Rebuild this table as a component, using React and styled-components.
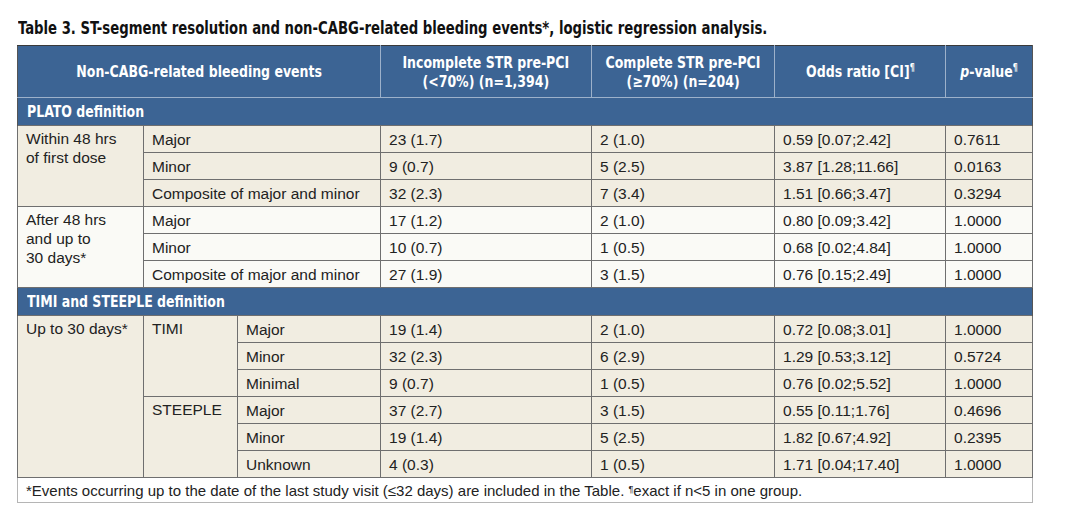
import React from "react";
import styled, { createGlobalStyle } from "styled-components";

const GlobalStyle = createGlobalStyle`
  body {
    margin: 0;
    background: #ffffff;
    font-family: "Liberation Sans", Arial, sans-serif;
  }
`;

const Page = styled.div`
  padding: 17px 0 0 17px;
  width: 1016px;
`;

// bold condensed face: DejaVu Sans Condensed squeezed a little more
const Narrow = styled.span`
  display: inline-block;
  white-space: nowrap;
  font-family: "DejaVu Sans Condensed", sans-serif;
  font-weight: bold;
  transform: scaleX(${(p) => p.$scale || 0.87});
  transform-origin: ${(p) => (p.$center ? "center" : "left")};
`;

const Title = styled.div`
  font-size: 17px;
  color: #111;
  line-height: 22px;
  height: 28px;
  padding-left: 1px;
`;

const Table = styled.table`
  border-collapse: collapse;
  width: 1015px;
  table-layout: fixed;
  font-family: "Liberation Sans", Arial, sans-serif;
  font-size: 15.5px;
  color: #222;
`;

const HeadCell = styled.th`
  background: #3c6494;
  color: #fff;
  font-weight: bold;
  font-size: 16px;
  line-height: 19px;
  height: 51px;
  padding: 0 2px;
  text-align: center;
  border-top: 1px solid #3a3a3a;
  border-left: 1px solid #9db1ca;
  border-right: 1px solid #9db1ca;
  border-bottom: 1px solid #9db1ca;
  &:first-child {
    border-left: 1px solid #555;
  }
  &:last-child {
    border-right: 1px solid #555;
  }
  sup {
    font-size: 10px;
    vertical-align: 6px;
    line-height: 0;
  }
  i {
    font-style: italic;
  }
`;

const SectionCell = styled.td`
  background: #3c6494;
  color: #fff;
  font-size: 16px;
  height: 27px;
  padding: 0 9px;
  border-left: 1px solid #555;
  border-right: 1px solid #555;
`;

const Cell = styled.td`
  background: ${(p) => (p.$light ? "#fafaf6" : "#f1ede1")};
  border: 1px solid #6f6f6f;
  height: 26px;
  padding: 0 8px;
  line-height: 19px;
  white-space: nowrap;
  vertical-align: ${(p) => (p.$top ? "top" : "middle")};
  padding-top: ${(p) => (p.$top ? "3px" : "0")};
`;

const Footer = styled.td`
  background: #fff;
  border: 1px solid #b5b5b5;
  border-top: 1px solid #6f6f6f;
  font-size: 15px;
  height: 24px;
  padding: 0 8px;
  color: #222;
  white-space: nowrap;
  sup {
    font-size: 9px;
    vertical-align: 4px;
    line-height: 0;
  }
`;

const plato = [
  {
    label: ["Within 48 hrs", "of first dose"],
    light: false,
    rows: [
      ["Major", "23 (1.7)", "2 (1.0)", "0.59 [0.07;2.42]", "0.7611"],
      ["Minor", "9 (0.7)", "5 (2.5)", "3.87 [1.28;11.66]", "0.0163"],
      ["Composite of major and minor", "32 (2.3)", "7 (3.4)", "1.51 [0.66;3.47]", "0.3294"],
    ],
  },
  {
    label: ["After 48 hrs", "and up to", "30 days*"],
    light: true,
    rows: [
      ["Major", "17 (1.2)", "2 (1.0)", "0.80 [0.09;3.42]", "1.0000"],
      ["Minor", "10 (0.7)", "1 (0.5)", "0.68 [0.02;4.84]", "1.0000"],
      ["Composite of major and minor", "27 (1.9)", "3 (1.5)", "0.76 [0.15;2.49]", "1.0000"],
    ],
  },
];

const timi = [
  {
    name: "TIMI",
    rows: [
      ["Major", "19 (1.4)", "2 (1.0)", "0.72 [0.08;3.01]", "1.0000"],
      ["Minor", "32 (2.3)", "6 (2.9)", "1.29 [0.53;3.12]", "0.5724"],
      ["Minimal", "9 (0.7)", "1 (0.5)", "0.76 [0.02;5.52]", "1.0000"],
    ],
  },
  {
    name: "STEEPLE",
    rows: [
      ["Major", "37 (2.7)", "3 (1.5)", "0.55 [0.11;1.76]", "0.4696"],
      ["Minor", "19 (1.4)", "5 (2.5)", "1.82 [0.67;4.92]", "0.2395"],
      ["Unknown", "4 (0.3)", "1 (0.5)", "1.71 [0.04;17.40]", "1.0000"],
    ],
  },
];

export default function App() {
  return (
    <Page>
      <GlobalStyle />
      <Title>
        <Narrow $scale={0.865}>
          Table 3. ST-segment resolution and non-CABG-related bleeding events*, logistic regression analysis.
        </Narrow>
      </Title>
      <Table>
        <colgroup>
          <col style={{ width: 126 }} />
          <col style={{ width: 94 }} />
          <col style={{ width: 143 }} />
          <col style={{ width: 211 }} />
          <col style={{ width: 183 }} />
          <col style={{ width: 171 }} />
          <col style={{ width: 87 }} />
        </colgroup>
        <thead>
          <tr>
            <HeadCell colSpan={3}>
              <Narrow $center>Non-CABG-related bleeding events</Narrow>
            </HeadCell>
            <HeadCell>
              <Narrow $center>Incomplete STR pre-PCI</Narrow>
              <br />
              <Narrow $center>(&lt;70%) (n=1,394)</Narrow>
            </HeadCell>
            <HeadCell>
              <Narrow $center>Complete STR pre-PCI</Narrow>
              <br />
              <Narrow $center>(≥70%) (n=204)</Narrow>
            </HeadCell>
            <HeadCell>
              <Narrow $center>
                Odds ratio [CI]<sup>¶</sup>
              </Narrow>
            </HeadCell>
            <HeadCell>
              <Narrow $center>
                <i>p</i>-value<sup>¶</sup>
              </Narrow>
            </HeadCell>
          </tr>
        </thead>
        <tbody>
          <tr>
            <SectionCell colSpan={7}>
              <Narrow>PLATO definition</Narrow>
            </SectionCell>
          </tr>
          {plato.map((group) =>
            group.rows.map((r, i) => (
              <tr key={group.label[0] + i}>
                {i === 0 && (
                  <Cell rowSpan={group.rows.length} $top $light={group.light}>
                    {group.label.map((l, k) => (
                      <div key={k}>{l}</div>
                    ))}
                  </Cell>
                )}
                <Cell colSpan={2} $light={group.light}>{r[0]}</Cell>
                <Cell $light={group.light}>{r[1]}</Cell>
                <Cell $light={group.light}>{r[2]}</Cell>
                <Cell $light={group.light}>{r[3]}</Cell>
                <Cell $light={group.light}>{r[4]}</Cell>
              </tr>
            ))
          )}
          <tr>
            <SectionCell colSpan={7}>
              <Narrow>TIMI and STEEPLE definition</Narrow>
            </SectionCell>
          </tr>
          {timi.map((group, g) =>
            group.rows.map((r, i) => (
              <tr key={group.name + i}>
                {g === 0 && i === 0 && (
                  <Cell rowSpan={6} $top>
                    Up to 30 days*
                  </Cell>
                )}
                {i === 0 && (
                  <Cell rowSpan={group.rows.length} $top>
                    {group.name}
                  </Cell>
                )}
                {r.map((v, k) => (
                  <Cell key={k}>{v}</Cell>
                ))}
              </tr>
            ))
          )}
          <tr>
            <Footer colSpan={7}>
              *Events occurring up to the date of the last study visit (≤32 days) are included in the Table. <sup>¶</sup>exact if n&lt;5 in one group.
            </Footer>
          </tr>
        </tbody>
      </Table>
    </Page>
  );
}
